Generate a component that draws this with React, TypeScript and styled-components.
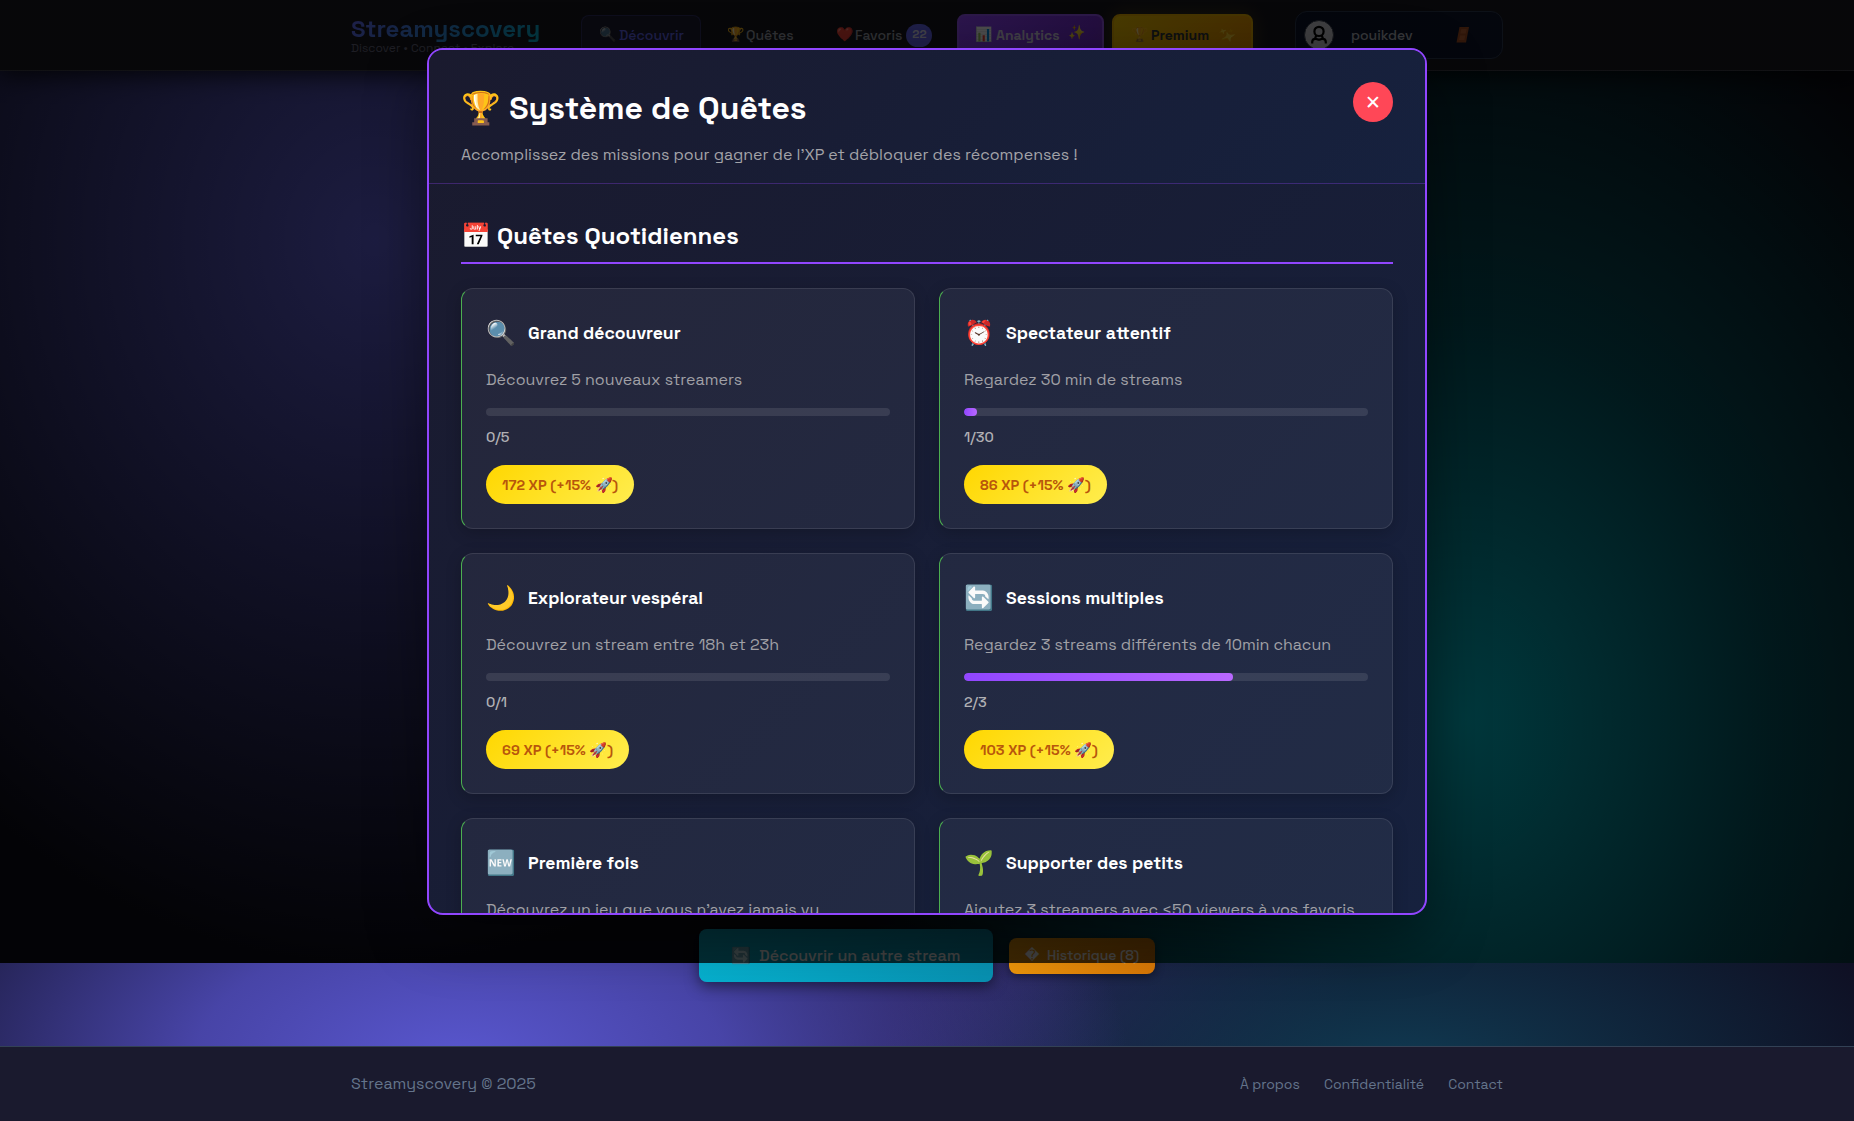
import React from 'react';
import styled, { createGlobalStyle, css } from 'styled-components';

const GlobalStyle = createGlobalStyle`
  *, *::before, *::after { box-sizing: border-box; }
  body {
    margin: 0;
    background: #0f0f1e;
    color: #fff;
    font-family: 'Space Grotesk', Inter, 'Noto Sans', sans-serif;
    font-size: 16px;
    line-height: 1.6;
  }
  h1, h2, h3, p { margin: 0; font-weight: inherit; }
  button { font: inherit; color: inherit; border: 0; background: none; padding: 0; }
`;

const Page = styled.div`
  position: relative;
  display: flex;
  flex-direction: column;
  min-height: 1121px;
  overflow: hidden;
  white-space: nowrap;
  background:
    radial-gradient(ellipse 640px 730px at 375px 240px, rgba(112, 112, 255, 1), transparent 100%) 0 0 / 100% 963px no-repeat,
    radial-gradient(ellipse 620px 800px at 1465px 720px, rgba(0, 222, 240, 1), rgba(0, 150, 165, 0.6) 50%, transparent 100%) 0 0 / 100% 963px no-repeat,
    linear-gradient(#0b0b16, #0b0b16) 0 0 / 100% 963px no-repeat,
    radial-gradient(ellipse 760px 400px at 460px 1065px, #5957cf, rgba(84, 80, 196, 0.82) 35%, transparent 88%),
    radial-gradient(ellipse 520px 230px at 1400px 1070px, #103a52, transparent 100%),
    radial-gradient(ellipse 330px 220px at 1030px 980px, #2a2054, transparent 100%),
    #0f0f23;
`;

const Header = styled.header`
  height: 71px;
  background: #17171f;
  border-bottom: 1px solid #3a3a44;
  box-shadow: 0 4px 24px rgba(0, 0, 0, 0.8);
`;

const HeaderInner = styled.div`
  display: flex;
  align-items: center;
  width: 1152px;
  height: 70px;
  margin: 0 auto;
`;

const Brand = styled.div`
  display: flex;
  flex-direction: column;
  width: 230px;
`;

const BrandName = styled.div`
  align-self: flex-start;
  font-size: 24px;
  font-weight: 700;
  line-height: 26px;
  color: transparent;
  background: linear-gradient(135deg, #6366f1, #06b6d4);
  background-clip: text;
`;

const Tagline = styled.div`
  font-size: 12px;
  line-height: 13px;
  color: #64647a;
`;

const NavItem = styled.div<{ $w: number; $h?: number; $kind?: 'active' | 'analytics' | 'premium'; $ml?: number; $pl?: number }>`
  display: flex;
  align-items: center;
  gap: 3px;
  width: ${p => p.$w}px;
  height: ${p => p.$h ?? 40}px;
  margin-left: ${p => p.$ml ?? 0}px;
  padding-left: ${p => p.$pl ?? 17}px;
  border-radius: 8px;
  border: 1px solid transparent;
  font-size: 14px;
  font-weight: 500;
  color: #9da1ac;
  ${p => p.$kind === 'active' && css`
    color: #6366f1;
    background: rgba(60, 60, 150, 0.16);
    border-color: rgba(99, 102, 241, 0.25);
  `}
  ${p => p.$kind === 'analytics' && css`
    color: #d5cfe6;
    font-weight: 700;
    background: linear-gradient(135deg, #9146ff, #6d28c9);
    border: 2px solid #9353f0;
  `}
  ${p => p.$kind === 'premium' && css`
    color: #2d3338;
    font-weight: 700;
    background: linear-gradient(135deg, #f0c400, #e88e00);
    border: 2px solid #e6ae00;
    box-shadow: 0 0 20px rgba(255, 200, 0, 0.2);
  `}
`;

const Emoji = styled.span<{ $size: number; $w?: number; $opacity?: number; $transform?: string }>`
  flex: none;
  display: inline-block;
  width: ${p => (p.$w ? `${p.$w}px` : 'auto')};
  font-size: ${p => p.$size}px;
  line-height: 1.25;
  opacity: ${p => p.$opacity ?? 1};
  transform: ${p => p.$transform ?? 'none'};
`;

const CountBadge = styled.span`
  display: grid;
  place-items: center;
  width: 26px;
  height: 23px;
  margin-left: 1px;
  border-radius: 12px;
  background: #6366f1;
  color: #d9d9ee;
  font-size: 12px;
  font-weight: 600;
`;

const UserBox = styled.div`
  display: flex;
  align-items: center;
  width: 208px;
  height: 48px;
  margin-left: auto;
  padding-left: 8px;
  border-radius: 12px;
  border: 1px solid #2b3850;
  background: #0d152a;
  font-size: 14px;
  font-weight: 500;
  color: #b4b8c2;
`;

const Avatar = styled.svg`
  width: 30px;
  height: 30px;
  border-radius: 50%;
`;

const UserName = styled.div`
  width: 105px;
  margin-left: 17px;
`;

const Main = styled.main`
  flex: 1;
  display: flex;
  align-items: flex-end;
  justify-content: center;
  padding-bottom: 64px;
`;

const Actions = styled.div`
  display: flex;
  align-items: center;
  gap: 16px;
`;

const ActionButton = styled.button<{ $tone: 'cyan' | 'amber' }>`
  display: flex;
  align-items: center;
  border-radius: 8px;
  color: #fff;
  font-weight: 500;
  ${p => p.$tone === 'cyan' ? css`
    width: 294px;
    height: 53px;
    padding-left: 32px;
    gap: 8px;
    font-size: 16px;
    background: linear-gradient(135deg, #06b6d4, #0891b2);
    box-shadow: 0 4px 14px rgba(0, 0, 0, 0.5);
  ` : css`
    width: 146px;
    height: 36px;
    padding-left: 16px;
    gap: 8px;
    font-size: 14px;
    background: linear-gradient(135deg, #f59e0b, #d97706);
    box-shadow: 0 2px 10px rgba(0, 0, 0, 0.45);
  `}
`;

const Unknown = styled.span`
  width: 14px;
  font-family: 'DejaVu Sans', sans-serif;
  font-size: 14px;
`;

const Footer = styled.footer`
  height: 75px;
  background: #1a1a2e;
  border-top: 1px solid #334155;
`;

const FooterInner = styled.div`
  display: flex;
  align-items: center;
  justify-content: space-between;
  width: 1152px;
  height: 74px;
  margin: 0 auto;
  color: #64748b;
`;

const FooterLinks = styled.div`
  display: flex;
  gap: 24px;
  padding-top: 1px;
  font-size: 14px;
`;

const Overlay = styled.div`
  position: absolute;
  top: 0;
  left: 0;
  right: 0;
  height: 963px;
  display: flex;
  align-items: center;
  justify-content: center;
  background: linear-gradient(rgba(0, 0, 0, 0.7) 0 71px, rgba(0, 0, 0, 0.75) 71px);
`;

const Modal = styled.section`
  width: 1000px;
  height: 90%;
  display: flex;
  flex-direction: column;
  overflow: hidden;
  border: 2px solid #9146ff;
  border-radius: 16px;
  background: linear-gradient(135deg, #1a1a2e, #16213e);
  box-shadow: 0 20px 60px rgba(0, 0, 0, 0.4);
`;

const ModalHeader = styled.div`
  flex: none;
  display: flex;
  justify-content: space-between;
  padding: 32px 32px 15px;
  border-bottom: 1px solid rgba(145, 70, 255, 0.3);
  background: linear-gradient(135deg, #1a1a2e, #16213e);
`;

const ModalHeading = styled.div`
  padding-top: 1px;
`;

const ModalTitle = styled.h1`
  margin-bottom: 8px;
  font-size: 32px;
  font-weight: 700;
`;

const ModalLead = styled.p`
  color: #a3a3a8;
  font-size: 16px;
`;

const CloseButton = styled.button`
  display: grid;
  place-items: center;
  width: 40px;
  height: 40px;
  border-radius: 50%;
  background: #ff4757;
  color: #fff;
  font-size: 19.2px;
  line-height: 1;
`;

const ModalBody = styled.div`
  flex: 1;
  min-height: 0;
  overflow: hidden;
  padding: 32px;
`;

const SectionTitle = styled.h2`
  padding: 1px 0 7px;
  margin-bottom: 24px;
  border-bottom: 2px solid #9146ff;
  font-size: 24px;
  font-weight: 600;
`;

const QuestGrid = styled.div`
  display: grid;
  grid-template-columns: 1fr 1fr;
  gap: 24px;
`;

const Card = styled.article`
  height: 241px;
  padding: 24px;
  border: 1px solid rgba(255, 255, 255, 0.1);
  border-left-color: #4caf50;
  border-radius: 12px;
  background: rgba(255, 255, 255, 0.05);
  box-shadow: 0 4px 16px rgba(0, 0, 0, 0.2);
`;

const CardHead = styled.div`
  display: flex;
  align-items: center;
  gap: 12px;
  padding-top: 1px;
  margin-bottom: 15px;
`;

const CardIcon = styled.span`
  width: 30px;
  font-size: 24px;
`;

const CardTitle = styled.h3`
  font-size: 17.6px;
  font-weight: 600;
`;

const CardText = styled.p`
  margin-bottom: 16px;
  color: #a0a0a6;
  font-size: 16px;
  line-height: 1.5;
`;

const Track = styled.div`
  height: 8px;
  margin-bottom: 9px;
  border-radius: 4px;
  overflow: hidden;
  background: rgba(255, 255, 255, 0.1);
`;

const TrackFill = styled.div`
  height: 100%;
  border-radius: 4px;
  background: linear-gradient(90deg, #9146ff, #b968ff);
`;

const Count = styled.div`
  margin-bottom: 16.6px;
  color: #b0b0b4;
  font-size: 14.4px;
  font-weight: 500;
  line-height: 24px;
`;

const Reward = styled.div`
  width: fit-content;
  padding: 9px 16px 7px;
  border-radius: 20px;
  background: linear-gradient(135deg, #ffd700, #ffed4e);
  color: #b8560c;
  font-size: 14.4px;
  font-weight: 600;
`;

interface Quest {
  icon: string;
  title: string;
  text: string;
  done: number;
  goal: number;
  xp: number;
}

const quests: Quest[] = [
  { icon: '🔍', title: 'Grand découvreur', text: 'Découvrez 5 nouveaux streamers', done: 0, goal: 5, xp: 172 },
  { icon: '⏰', title: 'Spectateur attentif', text: 'Regardez 30 min de streams', done: 1, goal: 30, xp: 86 },
  { icon: '🌙', title: 'Explorateur vespéral', text: 'Découvrez un stream entre 18h et 23h', done: 0, goal: 1, xp: 69 },
  { icon: '🔄', title: 'Sessions multiples', text: 'Regardez 3 streams différents de 10min chacun', done: 2, goal: 3, xp: 103 },
  { icon: '🆕', title: 'Première fois', text: "Découvrez un jeu que vous n'avez jamais vu", done: 0, goal: 1, xp: 92 },
  { icon: '🌱', title: 'Supporter des petits', text: 'Ajoutez 3 streamers avec <50 viewers à vos favoris', done: 0, goal: 3, xp: 115 },
];

const QuestCard = ({ quest }: { quest: Quest }) => (
  <Card>
    <CardHead>
      <CardIcon>{quest.icon}</CardIcon>
      <CardTitle>{quest.title}</CardTitle>
    </CardHead>
    <CardText>{quest.text}</CardText>
    <Track>
      <TrackFill style={{ width: `${(quest.done / quest.goal) * 100}%` }} />
    </Track>
    <Count>{`${quest.done}/${quest.goal}`}</Count>
    <Reward>{`${quest.xp} XP (+15% 🚀)`}</Reward>
  </Card>
);

const App = () => (
  <>
    <GlobalStyle />
    <Page>
      <Header>
        <HeaderInner>
          <Brand>
            <BrandName>Streamyscovery</BrandName>
            <Tagline>Discover • Connect • Explore</Tagline>
          </Brand>
          <NavItem $w={120} $kind="active">
            <Emoji $size={14} $w={17} $opacity={0.8}>🔍</Emoji>
            <span>Découvrir</span>
          </NavItem>
          <NavItem $w={109} $ml={8} $pl={17}>
            <Emoji $size={14} $w={16}>🏆</Emoji>
            <span>Quêtes</span>
          </NavItem>
          <NavItem $w={132} $pl={17}>
            <Emoji $size={14} $w={16}>❤️</Emoji>
            <span>Favoris</span>
            <CountBadge>22</CountBadge>
          </NavItem>
          <NavItem $w={147} $h={43} $kind="analytics" $ml={7} $pl={16}>
            <Emoji $size={14} $w={18}>📊</Emoji>
            <span>Analytics</span>
            <Emoji $size={14} $w={18} $transform="translate(5px, -2px)">✨</Emoji>
          </NavItem>
          <NavItem $w={141} $h={43} $kind="premium" $ml={8} $pl={17}>
            <Emoji $size={14} $w={17} $opacity={0.75}>🏆</Emoji>
            <span>Premium</span>
            <Emoji $size={14} $w={17} $opacity={0.85} $transform="translateX(6px) rotate(70deg)">✨</Emoji>
          </NavItem>
          <UserBox>
            <Avatar viewBox="0 0 30 30">
              <circle cx="15" cy="15" r="14.5" fill="#cfcfd6" stroke="#3b4252" />
              <g fill="none" stroke="#000" strokeWidth="2.2">
                <circle cx="15" cy="11.4" r="4.6" />
                <path d="M8.200 23.600v-1.600c0-2 1.400-3.200 3.200-3.200 1.700 0 2.200.9 3.600.9s1.900-.9 3.600-.9c1.800 0 3.200 1.200 3.200 3.200v1.600" />
                <path d="M12.300 15.200l-1.300 3.600M17.700 15.200l1.300 3.600" />
              </g>
            </Avatar>
            <UserName>pouikdev</UserName>
            <svg width="14" height="18" viewBox="0 0 14 18">
              <path d="M3.500 1H13L10 16.500H.500Z" fill="#a04c22" />
              <path d="M5.300 3h5.400l-1 4.500H4.400ZM4 9.500h5.300l-1 4.500H3Z" fill="#b86034" />
            </svg>
          </UserBox>
        </HeaderInner>
      </Header>

      <Main>
        <Actions>
          <ActionButton $tone="cyan">
            <Emoji $size={16} $w={20} $opacity={0.8}>🔄</Emoji>
            <span>Découvrir un autre stream</span>
          </ActionButton>
          <ActionButton $tone="amber">
            <Unknown>�</Unknown>
            <span>Historique (8)</span>
          </ActionButton>
        </Actions>
      </Main>

      <Footer>
        <FooterInner>
          <span>Streamyscovery © 2025</span>
          <FooterLinks>
            <span>À propos</span>
            <span>Confidentialité</span>
            <span>Contact</span>
          </FooterLinks>
        </FooterInner>
      </Footer>

      <Overlay>
        <Modal>
          <ModalHeader>
            <ModalHeading>
              <ModalTitle>🏆 Système de Quêtes</ModalTitle>
              <ModalLead>Accomplissez des missions pour gagner de l'XP et débloquer des récompenses !</ModalLead>
            </ModalHeading>
            <CloseButton aria-label="Fermer">✕</CloseButton>
          </ModalHeader>
          <ModalBody>
            <SectionTitle>📅 Quêtes Quotidiennes</SectionTitle>
            <QuestGrid>
              {quests.map(quest => (
                <QuestCard key={quest.title} quest={quest} />
              ))}
            </QuestGrid>
          </ModalBody>
        </Modal>
      </Overlay>
    </Page>
  </>
);

export default App;
